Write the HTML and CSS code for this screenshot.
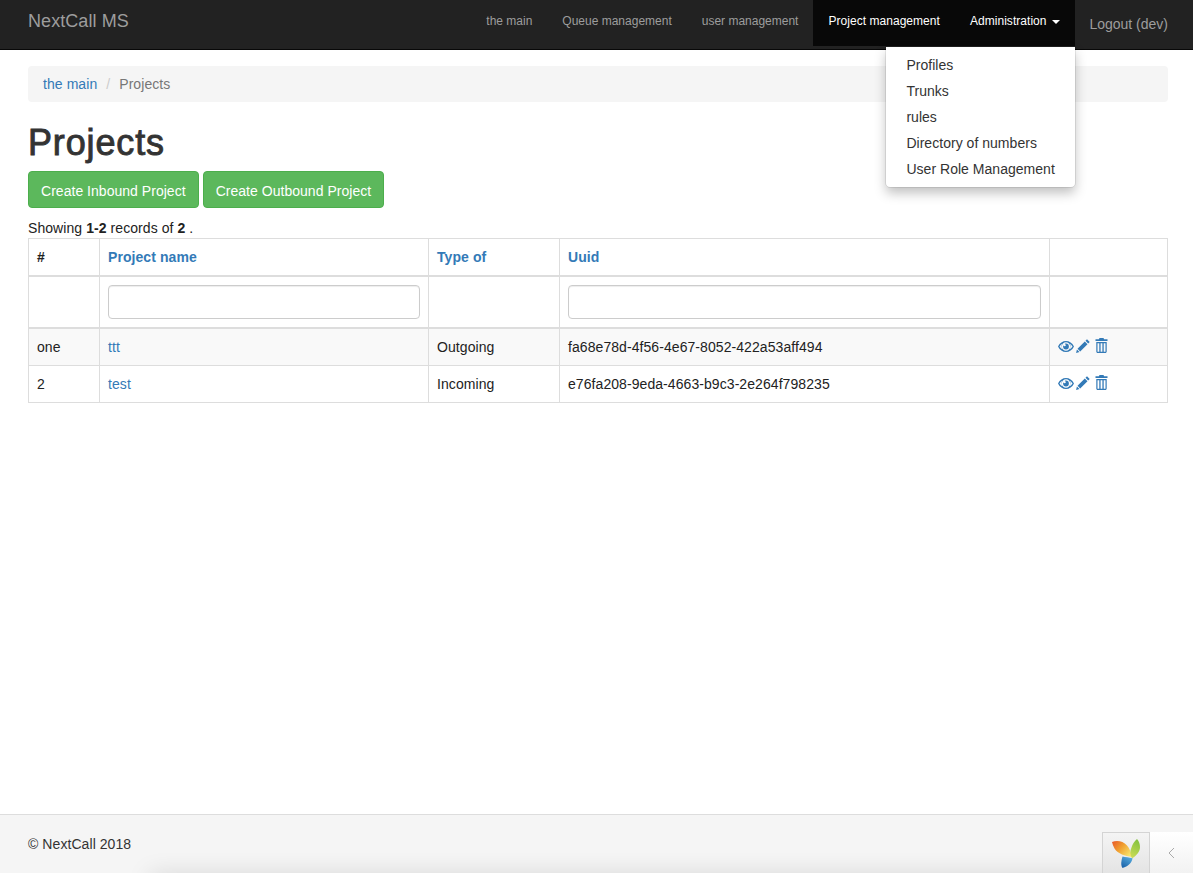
FILE: index.html
```html
<!DOCTYPE html>
<html lang="en">
<head>
<meta charset="utf-8">
<title>Projects</title>
<link rel="stylesheet" href="styles.css">
</head>
<body>
<header class="navbar">
  <a class="brand" href="#">NextCall MS</a>
  <nav class="nav">
    <a class="nav-link" href="#">the main</a>
    <a class="nav-link" href="#">Queue management</a>
    <a class="nav-link" href="#">user management</a>
    <a class="nav-link active" href="#">Project management</a>
    <div class="nav-drop">
      <a class="nav-link active" href="#">Administration <span class="caret"></span></a>
      <ul class="dropdown">
        <li><a href="#">Profiles</a></li>
        <li><a href="#">Trunks</a></li>
        <li><a href="#">rules</a></li>
        <li><a href="#">Directory of numbers</a></li>
        <li><a href="#">User Role Management</a></li>
      </ul>
    </div>
    <a class="logout" href="#">Logout (dev)</a>
  </nav>
</header>
<main class="container">
  <ol class="breadcrumb">
    <li><a href="#">the main</a></li>
    <li class="sep">/</li>
    <li class="current">Projects</li>
  </ol>
  <h1 class="title">Projects</h1>
  <div class="actions">
    <a class="btn" href="#">Create Inbound Project</a>
    <a class="btn" href="#">Create Outbound Project</a>
  </div>
  <div class="summary">Showing <b>1-2</b> records of <b>2</b> .</div>
  <table class="grid">
    <colgroup>
      <col class="c1"><col class="c2"><col class="c3"><col class="c4"><col class="c5">
    </colgroup>
    <thead>
      <tr class="head">
        <th>#</th>
        <th><a href="#">Project name</a></th>
        <th><a href="#">Type of</a></th>
        <th><a href="#">Uuid</a></th>
        <th></th>
      </tr>
      <tr class="filters">
        <td></td>
        <td><input class="field" type="text"></td>
        <td></td>
        <td><input class="field" type="text"></td>
        <td></td>
      </tr>
    </thead>
    <tbody>
      <tr class="odd">
        <td>one</td>
        <td><a href="#">ttt</a></td>
        <td>Outgoing</td>
        <td>fa68e78d-4f56-4e67-8052-422a53aff494</td>
        <td class="icons">
          <svg class="ic ic-eye" viewBox="0 0 16 11"><path fill-rule="evenodd" d="M0 5.500C1.800 1.900 4.600 0 8 0s6.200 1.900 8 5.500C14.200 9.100 11.400 11 8 11S1.800 9.100 0 5.500zm8-4.300a4.300 4.300 0 1 0 0 8.600 4.300 4.300 0 0 0 0-8.600zM1.500 5.500c.7 1.100 1.600 2 2.600 2.700a5.300 5.300 0 0 1 0-5.400C3.100 3.500 2.200 4.400 1.500 5.500zm10.400-2.700a5.300 5.300 0 0 1 0 5.400c1-.7 1.900-1.600 2.600-2.700-.7-1.100-1.600-2-2.600-2.700zM8 2.600a2.900 2.900 0 1 1-2.900 2.900c0-.5.100-.9.300-1.300a1.200 1.200 0 1 0 1.400-1.300c.4-.2.800-.3 1.200-.3z"/></svg>
          <svg class="ic ic-pen" viewBox="0 0 14 14"><path d="M11 .3 13.700 3l-1.500 1.500-2.700-2.700zM8.800 2.500l2.700 2.700-7.300 7.300-2.700-2.700zM.9 10.500l2.600 2.600-3.400.8z"/></svg>
          <svg class="ic ic-trash" viewBox="0 0 13 15"><path fill-rule="evenodd" d="M4.500 0h4l.6 1.300h3.400v1.700H.5V1.300h3.400zM1.300 4h10.400v9.500c0 .8-.6 1.500-1.400 1.500H2.700c-.8 0-1.400-.7-1.400-1.500zm1.200 1.200v8.500h1.800V5.200zm3.100 0v8.500h1.800V5.200zm3.100 0v8.500h1.800V5.200z"/></svg>
        </td>
      </tr>
      <tr>
        <td>2</td>
        <td><a href="#">test</a></td>
        <td>Incoming</td>
        <td>e76fa208-9eda-4663-b9c3-2e264f798235</td>
        <td class="icons">
          <svg class="ic ic-eye" viewBox="0 0 16 11"><path fill-rule="evenodd" d="M0 5.500C1.800 1.900 4.600 0 8 0s6.200 1.900 8 5.500C14.200 9.100 11.400 11 8 11S1.800 9.100 0 5.500zm8-4.300a4.300 4.300 0 1 0 0 8.600 4.300 4.300 0 0 0 0-8.600zM1.500 5.500c.7 1.100 1.600 2 2.600 2.700a5.300 5.300 0 0 1 0-5.400C3.100 3.500 2.200 4.400 1.500 5.500zm10.400-2.700a5.300 5.300 0 0 1 0 5.400c1-.7 1.900-1.600 2.600-2.700-.7-1.100-1.600-2-2.600-2.700zM8 2.600a2.900 2.900 0 1 1-2.900 2.900c0-.5.100-.9.300-1.300a1.200 1.200 0 1 0 1.400-1.300c.4-.2.800-.3 1.200-.3z"/></svg>
          <svg class="ic ic-pen" viewBox="0 0 14 14"><path d="M11 .3 13.700 3l-1.500 1.500-2.700-2.700zM8.800 2.500l2.700 2.700-7.300 7.300-2.700-2.700zM.9 10.500l2.600 2.600-3.400.8z"/></svg>
          <svg class="ic ic-trash" viewBox="0 0 13 15"><path fill-rule="evenodd" d="M4.500 0h4l.6 1.300h3.400v1.700H.5V1.300h3.400zM1.300 4h10.400v9.500c0 .8-.6 1.500-1.400 1.500H2.700c-.8 0-1.400-.7-1.400-1.500zm1.200 1.200v8.500h1.800V5.200zm3.100 0v8.500h1.800V5.200zm3.100 0v8.500h1.800V5.200z"/></svg>
        </td>
      </tr>
    </tbody>
  </table>
</main>
<footer class="footer">© NextCall 2018</footer>
<div class="toolbar-shadow"></div>
<aside class="toolbar">
  <div class="toolbar-logo">
    <svg class="yii" viewBox="0 0 28 29">
      <defs>
        <linearGradient id="leafR" x1="0" y1="0" x2="1" y2="0.7"><stop offset="0" stop-color="#e8562a"/><stop offset="0.5" stop-color="#f0a030"/><stop offset="1" stop-color="#f6e26a"/></linearGradient>
        <linearGradient id="leafG" x1="0.6" y1="0" x2="0.3" y2="1"><stop offset="0" stop-color="#84c23f"/><stop offset="1" stop-color="#cbdc55"/></linearGradient>
        <linearGradient id="leafB" x1="0.8" y1="0" x2="0.2" y2="1"><stop offset="0" stop-color="#58addf"/><stop offset="1" stop-color="#1a62a8"/></linearGradient>
      </defs>
      <path fill="url(#leafR)" d="M0 3C5 1 11 2 15 6.500c2.500 2.800 4 6.500 5 11.500C13 17 6 15 2.500 9.500 1.300 7.500.5 5.200 0 3z"/>
      <path fill="url(#leafG)" d="M25 0c2 2.200 3 5 3 8.200 0 4.200-3 7.800-8 11.300-1.800-3.700-2.300-7.300-.5-11C20.600 5 22.500 2.200 25 0z"/>
      <path fill="url(#leafB)" d="M10.500 17.500c3 .5 6.500 1 10 1.800-.6 4.500-4.500 8.200-10 9.700-1.300-2-1.500-4.500-1-7 .2-1.500.5-3 1-4.500z"/>
    </svg>
  </div>
  <div class="toolbar-toggle">
    <svg class="chev" viewBox="0 0 7 12"><path d="M6 1 1 6l5 5" fill="none" stroke="#aaa" stroke-width="1"/></svg>
  </div>
</aside>
</body>
</html>
```

FILE: styles.css
```css
* { box-sizing: border-box; }
html, body { height: 100%; }
body {
  margin: 0;
  display: flex;
  flex-direction: column;
  min-height: 873px;
  height: 873px;
  overflow: hidden;
  font-family: "Liberation Sans", Arial, sans-serif;
  font-size: 14px;
  line-height: 20px;
  letter-spacing: .07px;
  color: #333;
  background: #fff;
}
a { color: #337ab7; text-decoration: none; }

.navbar {
  height: 50px;
  flex: none;
  display: flex;
  justify-content: space-between;
  padding: 0 25px 0 28px;
  background: #222;
  border-bottom: 1px solid #080808;
}
.brand {
  padding-top: 11px;
  font-size: 18px;
  line-height: 20px;
  color: #9d9d9d;
}
.nav { display: flex; align-items: flex-start; }
.nav-link {
  display: block;
  height: 46px;
  padding: 11px 15px 15px;
  font-size: 12px;
  line-height: 20px;
  letter-spacing: 0;
  color: #9d9d9d;
}
.nav-link.active { background: #080808; color: #fff; letter-spacing: .04px; }
.nav-drop { position: relative; }
.caret {
  display: inline-block;
  width: 0;
  height: 0;
  margin-left: 2px;
  vertical-align: middle;
  border-top: 4px solid #fff;
  border-left: 4px solid transparent;
  border-right: 4px solid transparent;
}
.logout {
  margin-left: 14.500px;
  padding-top: 14px;
  font-size: 14px;
  line-height: 20px;
  letter-spacing: 0;
  color: #9d9d9d;
}
.dropdown {
  position: absolute;
  top: 47px;
  right: 0;
  width: 189px;
  margin: 0;
  padding: 5px 0;
  list-style: none;
  background: #fff;
  border-radius: 0 0 4px 4px;
  box-shadow: 0 6px 12px rgba(0, 0, 0, .25);
  outline: 1px solid rgba(0, 0, 0, .08);
  z-index: 10;
}
.dropdown a {
  display: block;
  padding: 3px 20px 3px 20.500px;
  letter-spacing: .03px;
  color: #333;
  white-space: nowrap;
}

.container {
  flex: 1;
  padding: 16px 25px 0 28px;
}
.breadcrumb {
  display: flex;
  height: 36px;
  margin: 0;
  padding: 8px 15px;
  list-style: none;
  background: #f5f5f5;
  border-radius: 4px;
}
.sep { padding: 0 9px; color: #ccc; }
.current { color: #777; }
.title {
  margin: 21px 0 8px;
  font-size: 36px;
  line-height: 40px;
  font-weight: 400;
  letter-spacing: .85px;
  -webkit-text-stroke: .9px #333;
  color: #333;
}
.actions { display: flex; gap: 4px; }
.btn {
  display: block;
  height: 37px;
  padding: 9px 12px 5px;
  line-height: 21px;
  letter-spacing: .03px;
  color: #fff;
  background: #5cb85c;
  border: 1px solid #4cae4c;
  border-radius: 4px;
}
.summary { margin-top: 10px; height: 20px; color: #222; }
b { font-weight: 700; }

.grid {
  width: 100%;
  table-layout: fixed;
  border-collapse: collapse;
  color: #222;
}
.c1 { width: 71px; }
.c2 { width: 329px; }
.c3 { width: 131px; }
.c4 { width: 490px; }
.grid th, .grid td {
  padding: 8px;
  border: 1px solid #ddd;
  text-align: left;
  vertical-align: top;
}
.grid th { font-weight: 700; }
.head th { height: 37px; border-bottom-width: 2px; }
.filters td { height: 52px; border-bottom-width: 2px; }
.grid tbody td { height: 37px; }
.odd td { background: #f9f9f9; }
.field {
  display: block;
  width: 100%;
  height: 34px;
  padding: 6px 12px;
  background: #fff;
  border: 1px solid #ccc;
  border-radius: 4px;
  box-shadow: inset 0 1px 1px rgba(0, 0, 0, .075);
}
.grid td.icons {
  padding-top: 10px;
  font-size: 0;
  line-height: 0;
}
.ic { display: inline-block; fill: #337ab7; vertical-align: top; }
.ic-eye { width: 16px; height: 11px; margin-top: 2px; margin-right: 2px; }
.ic-pen { width: 14px; height: 14px; margin-right: 5px; }
.ic-trash { width: 13px; height: 15px; margin-top: -1px; }

.footer {
  flex: none;
  height: 59px;
  padding: 19px 25px 0 28px;
  background: #f5f5f5;
  border-top: 1px solid #ddd;
  color: #333;
}
.toolbar-shadow {
  position: fixed;
  left: 150px;
  right: 0;
  bottom: -14px;
  height: 10px;
  box-shadow: 0 0 24px rgba(0, 0, 0, .22);
}
.toolbar {
  position: fixed;
  right: 0;
  bottom: 0;
  display: flex;
  height: 41px;
}
.toolbar-logo {
  display: flex;
  align-items: center;
  justify-content: center;
  width: 48px;
  background: linear-gradient(#f4f4f4, #e4e4e4);
  border: 1px solid #d4d4d4;
  border-bottom: 0;
}
.yii { width: 28px; height: 29px; }
.toolbar-toggle {
  display: flex;
  align-items: center;
  justify-content: center;
  width: 43px;
  background: linear-gradient(#fff, #f2f2f2);
}
.chev { width: 7px; height: 12px; }
```
